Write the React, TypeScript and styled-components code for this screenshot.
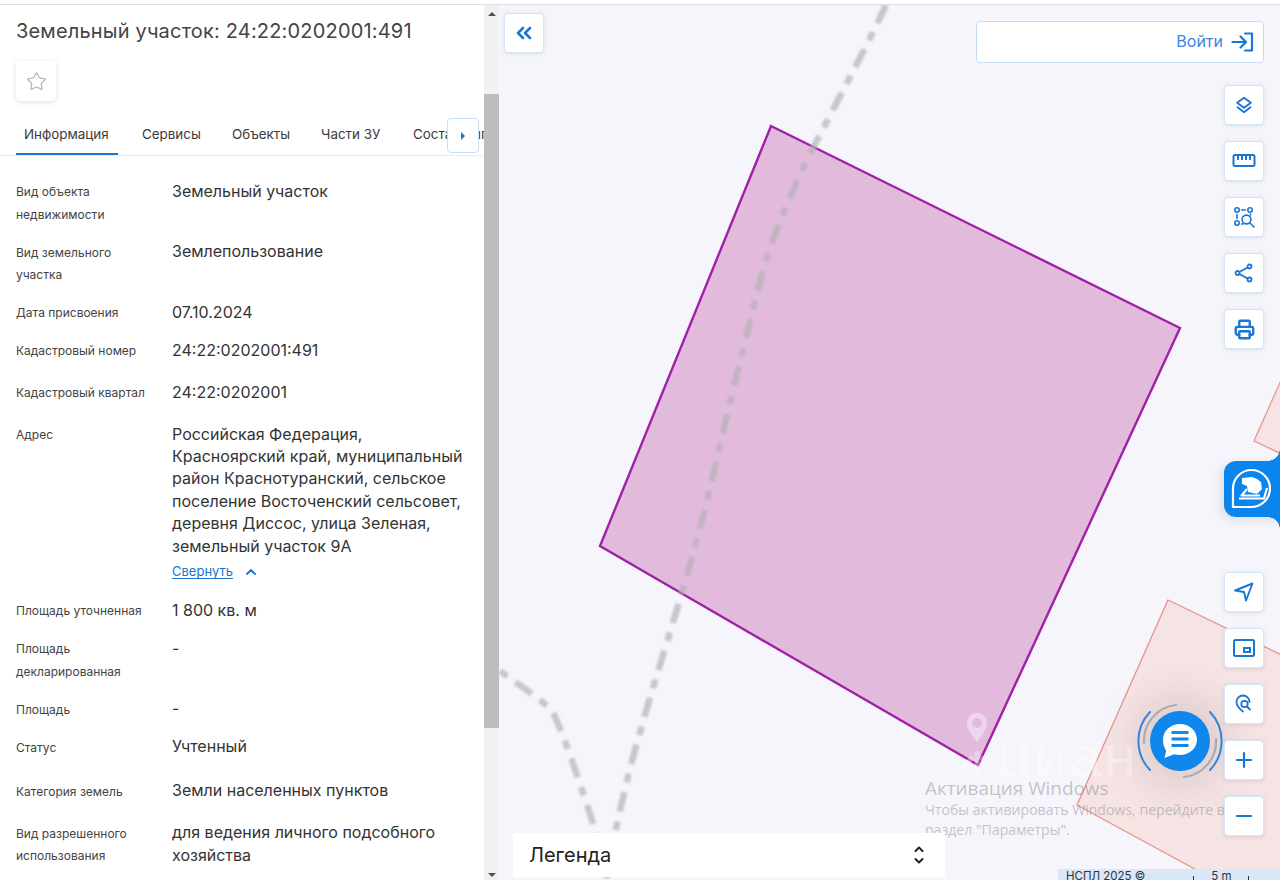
import React from 'react';
import styled, { createGlobalStyle } from 'styled-components';
import { ChevronsLeft, ChevronUp, Star, Printer, Plus, Minus } from 'lucide-react';

const Global = createGlobalStyle`
  html, body { margin: 0; padding: 0; height: 880px; overflow: hidden; background: #fff; }
  body { font-family: Inter, "Liberation Sans", sans-serif; color: #2b2b2b; }
`;

const Page = styled.div`
  width: 1280px; height: 880px; display: flex; flex-direction: column; overflow: hidden;
`;
const TopStrip = styled.div`
  height: 4px; flex: none; background: #fff; border-bottom: 1px solid #dcdfe3;
`;
const Body = styled.div`
  flex: 1; min-height: 0; display: flex;
`;
const Panel = styled.aside`
  position: relative; width: 484px; flex: none; background: #fff; overflow: hidden;
  padding-top: 12px; box-sizing: border-box;
`;
const Title = styled.h1`
  margin: 0 0 0 16px; font-size: 20px; line-height: 28px; font-weight: 400; color: #444;
  letter-spacing: 0.18px; white-space: nowrap;
`;
const StarButton = styled.button`
  display: flex; align-items: center; justify-content: center; width: 40px; height: 40px;
  margin: 16px 0 0 16px; padding: 0; border: 0; border-radius: 4px; background: #fff;
  box-shadow: 0 1px 5px rgba(40, 60, 90, 0.16); color: #b5b5b5;
`;
const Tabs = styled.nav`
  display: flex; gap: 16px; margin-top: 18px; height: 37px; box-sizing: border-box;
  padding-left: 16px; border-bottom: 1px solid #e6edf4; white-space: nowrap; overflow: hidden;
`;
const Tab = styled.div<{ $active?: boolean; $width?: number }>`
  height: 37px; flex: none; box-sizing: border-box; padding: 5px 0 0 8px; font-size: 13.4px; line-height: 20px;
  width: ${p => (p.$width ? `${p.$width}px` : 'auto')};
  color: #3a3a3a; border-bottom: ${p => (p.$active ? '3px solid #1976d2' : '3px solid transparent')};
`;
const TabArrow = styled.button`
  position: absolute; left: 447px; top: 113px; width: 32px; height: 35px; padding: 0;
  display: flex; align-items: center; justify-content: center;
  background: #fff; border: 1px solid #c9def5; border-radius: 4px;
`;
const Fields = styled.div`
  padding: 23.5px 16px 0;
`;
const Row = styled.div<{ $gap?: number }>`
  display: grid; grid-template-columns: 156px 1fr; padding-bottom: ${p => p.$gap ?? 15.7}px;
`;
const Label = styled.div`
  font-size: 12px; line-height: 22.4px; color: #444; padding: 1.6px 16px 0 0; margin-bottom: -1.6px;
`;
const Value = styled.div`
  font-size: 16px; line-height: 22.4px; color: #333;
`;
const Collapse = styled.div`
  display: flex; align-items: center; gap: 10px; height: 28px; padding-top: 1px; margin-bottom: -2.2px;
  font-size: 13px; color: #1976d2; box-sizing: border-box;
  u { text-underline-offset: 2px; }
`;
const Scrollbar = styled.div`
  position: relative; width: 15px; flex: none; background: #f1f1f1;
`;
const ScrollThumb = styled.div`
  position: absolute; left: 0; right: 0; top: 89px; height: 634px; background: #bdbdbd;
`;
const ScrollUp = styled.div`
  position: absolute; left: 4px; top: 7px; width: 0; height: 0;
  border-left: 4px solid transparent; border-right: 4px solid transparent; border-bottom: 4px solid #505050;
`;
const ScrollDown = styled.div`
  position: absolute; left: 4px; bottom: 3px; width: 0; height: 0;
  border-left: 4px solid transparent; border-right: 4px solid transparent; border-top: 4px solid #505050;
`;
const MapArea = styled.main`
  position: relative; flex: 1; min-width: 0; background: #f5f5fb; overflow: hidden;
`;
const MapCanvas = styled.svg`
  position: absolute; left: 0; top: 0; width: 781px; height: 875px;
`;
const ControlButton = styled.button`
  display: flex; align-items: center; justify-content: center; width: 40px; height: 40px; padding: 0;
  background: #fff; border: 1px solid #d5e4f6; border-radius: 4px; box-sizing: border-box;
  box-shadow: 0 1px 4px rgba(60, 90, 130, 0.14); color: #1976d2;
`;
const CollapseHolder = styled.div`
  position: absolute; left: 5px; top: 8px;
`;
const LoginBar = styled.div`
  position: absolute; left: 477px; top: 16px; width: 288px; height: 42px; box-sizing: border-box;
  display: flex; align-items: center; justify-content: flex-end; gap: 8px; padding: 0 9px 2px 0;
  background: #fff; border: 1px solid #c5dcf6; border-radius: 4px;
  font-size: 16px; color: #3d85d8;
`;
const LoginIcon = styled.svg`
  width: 23px; height: 20px; color: #1976d2; flex: none; margin-top: 2px;
`;
const ToolStack = styled.div<{ $top: number }>`
  position: absolute; right: 16px; top: ${p => p.$top}px; display: flex; flex-direction: column; gap: 16px;
`;
const SideTab = styled.div`
  position: absolute; right: 0; top: 456px; width: 56px; height: 56px;
  display: flex; align-items: center; justify-content: center; padding-right: 1px; box-sizing: border-box;
  background: #0b85ee; border-radius: 12px 0 0 12px;
  box-shadow: -3px 3px 10px rgba(40, 60, 90, 0.12);
  &::before, &::after {
    content: ''; position: absolute; right: 0; width: 12px; height: 12px;
  }
  &::before { top: -12px; background: radial-gradient(circle at 0 0, transparent 11.5px, #0b85ee 12px); }
  &::after { bottom: -12px; background: radial-gradient(circle at 0 100%, transparent 11.5px, #0b85ee 12px); }
`;
const ChatWrap = styled.div`
  position: absolute; left: 637px; top: 692px; width: 88px; height: 88px;
  display: flex; align-items: center; justify-content: center;
`;
const ChatRings = styled.svg`
  position: absolute; left: 0; top: 0; width: 88px; height: 88px;
`;
const ChatCircle = styled.div`
  position: relative; width: 60px; height: 60px; border-radius: 50%; background: #0f87ec;
  display: flex; align-items: center; justify-content: center;
  box-shadow: 0 0 38px 16px rgba(90, 90, 90, 0.15);
`;
const Legend = styled.div`
  position: absolute; left: 14px; top: 828px; width: 432px; height: 44px; box-sizing: border-box;
  display: flex; align-items: center; justify-content: space-between; padding: 0 20px 0 16px;
  background: #fff; border-radius: 2px; font-size: 20px; color: #222;
`;
const LegendChevrons = styled.svg`
  width: 12px; height: 20px; display: block;
`;
const Scale = styled.div`
  position: absolute; left: 559px; top: 864px; width: 222px; height: 11px; overflow: hidden;
  background: #d8e8f8; font-size: 11.5px; line-height: 14px; color: #30343a; padding-left: 8px; box-sizing: border-box;
  display: flex; gap: 48px; white-space: nowrap;
`;
const ScaleRuler = styled.span`
  width: 56px; height: 11px; text-align: center; box-sizing: border-box; position: relative;
  &::before, &::after {
    content: ''; position: absolute; bottom: 0; width: 1px; height: 4px; background: #30343a;
  }
  &::before { left: 0; }
  &::after { right: 0; }
`;
const ActivationNote = styled.div`
  position: absolute; left: 426px; top: 771px; color: rgba(120, 120, 125, 0.42);
  font-family: "Open Sans", sans-serif; white-space: nowrap; pointer-events: none;
`;
const ActivationTitle = styled.div`
  font-size: 18.9px; line-height: 24px;
`;
const ActivationText = styled.div`
  font-size: 14.1px; line-height: 20px;
`;
const Watermark = styled.div`
  position: absolute; left: 499px; top: 722px; color: rgba(255, 255, 255, 0.38);
  font-size: 59px; line-height: 60px; font-family: "Liberation Sans", sans-serif; letter-spacing: 2px; pointer-events: none;
`;
const WatermarkMark = styled.svg`
  position: absolute; left: 450px; top: 706px; width: 54px; height: 70px; pointer-events: none;
`;

const fields: { label: string; value: string; gap?: number }[] = [
  { label: 'Вид объекта недвижимости', value: 'Земельный участок' },
  { label: 'Вид земельного участка', value: 'Землепользование' },
  { label: 'Дата присвоения', value: '07.10.2024' },
  { label: 'Кадастровый номер', value: '24:22:0202001:491', gap: 19.6 },
  { label: 'Кадастровый квартал', value: '24:22:0202001', gap: 19.6 },
];
const fieldsAfter: { label: string; value: string; gap?: number }[] = [
  { label: 'Площадь уточненная', value: '1 800 кв. м' },
  { label: 'Площадь декларированная', value: '-' },
  { label: 'Площадь', value: '-' },
  { label: 'Статус', value: 'Учтенный', gap: 21.6 },
  { label: 'Категория земель', value: 'Земли населенных пунктов', gap: 19.6 },
  { label: 'Вид разрешенного использования', value: 'для ведения личного подсобного хозяйства' },
];

const Icon = ({ children, size = 22 }: { children: React.ReactNode; size?: number }) => (
  <svg width={size} height={size} viewBox="0 0 24 24" fill="none" stroke="currentColor" strokeWidth="2" strokeLinecap="round" strokeLinejoin="round">
    {children}
  </svg>
);

export default function App() {
  return (
    <Page>
      <Global />
      <TopStrip />
      <Body>
        <Panel>
          <Title>Земельный участок: 24:22:0202001:491</Title>
          <StarButton><Star size={21} strokeWidth={1.4} /></StarButton>
          <Tabs>
            <Tab $active $width={102}>Информация</Tab>
            <Tab $width={74}>Сервисы</Tab>
            <Tab $width={73}>Объекты</Tab>
            <Tab $width={76}>Части ЗУ</Tab>
            <Tab>Состав выписки</Tab>
          </Tabs>
          <TabArrow>
            <svg width="6" height="8" viewBox="0 0 6 8"><path d="M1 0l4 4-4 4z" fill="#1976d2" /></svg>
          </TabArrow>
          <Fields>
            {fields.map(f => (
              <Row key={f.label} $gap={f.gap}>
                <Label>{f.label}</Label>
                <Value>{f.value}</Value>
              </Row>
            ))}
            <Row>
              <Label>Адрес</Label>
              <Value>
                Российская Федерация, Красноярский край, муниципальный район Краснотуранский, сельское поселение Восточенский сельсовет, деревня Диссос, улица Зеленая, земельный участок 9А
                <Collapse>
                  <u>Свернуть</u>
                  <ChevronUp size={16} strokeWidth={2.800} />
                </Collapse>
              </Value>
            </Row>
            {fieldsAfter.map(f => (
              <Row key={f.label} $gap={f.gap}>
                <Label>{f.label}</Label>
                <Value>{f.value}</Value>
              </Row>
            ))}
          </Fields>
        </Panel>
        <Scrollbar>
          <ScrollUp />
          <ScrollThumb />
          <ScrollDown />
        </Scrollbar>
        <MapArea>
          <MapCanvas viewBox="499 5 781 875">
            <defs>
              <filter id="soft" x="-5%" y="-5%" width="110%" height="110%">
                <feGaussianBlur stdDeviation="0.8" />
              </filter>
            </defs>
            <polygon points="1168,600 1290,659 1290,880 1215,880 1077,805" fill="#f6e3e3" stroke="#e8958a" strokeWidth="1.3" />
            <polygon points="1290,360 1254,441 1290,458" fill="#f6e3e3" stroke="#e8958a" strokeWidth="1.3" />
            <polygon points="771,126 1180,328 978,765 600,546" fill="#e2bbdc" stroke="#a021a8" strokeWidth="2.400" />
            <g fill="none" filter="url(#soft)">
              <path d="M886,5 C860,60 835,105 812,150 C790,195 770,240 758,290 C745,340 728,410 712,480 C698,540 680,600 660,665 C640,730 622,790 606,880" stroke="#b4b0b6" strokeOpacity="0.68" strokeWidth="6.500" strokeDasharray="20 10 9 10" />
              <path d="M500,671 C520,686 540,698 553,712 C570,750 585,800 597,835" stroke="#bfbfc3" strokeOpacity="0.85" strokeWidth="6.500" strokeDasharray="9 10 20 10" />
            </g>
          </MapCanvas>
          <WatermarkMark viewBox="0 0 54 70">
            <path d="M28 2C21.500 2 18 7 18 12c0 7 10 19 10 19s10-12 10-19c0-5-3.500-10-10-10zm0 15a5 5 0 1 1 0-10 5 5 0 0 1 0 10z" fill="rgba(255,255,255,0.4)" />
            <path d="M4 66L24 46M28 40v26M52 66L32 46" stroke="rgba(255,255,255,0.32)" strokeWidth="5" fill="none" />
          </WatermarkMark>
          <Watermark>циан</Watermark>
          <ActivationNote>
            <ActivationTitle>Активация Windows</ActivationTitle>
            <ActivationText>Чтобы активировать Windows, перейдите в</ActivationText>
            <ActivationText>раздел "Параметры".</ActivationText>
          </ActivationNote>
          <CollapseHolder>
            <ControlButton><ChevronsLeft size={24} strokeWidth={2.600} /></ControlButton>
          </CollapseHolder>
          <LoginBar>
            Войти
            <LoginIcon viewBox="0 0 23 20" fill="none" stroke="currentColor" strokeWidth="2.200" strokeLinecap="round" strokeLinejoin="round">
              <path d="M1.500 10H14M9.500 4.500L15 10l-5.500 5.500" />
              <path d="M14 1.500h7v17h-7" />
            </LoginIcon>
          </LoginBar>
          <ToolStack $top={80}>
            <ControlButton>
              <Icon>
                <path d="M12 4l7.500 5.500L12 15 4.500 9.500z" />
                <path d="M5 14.500l7 5.500 7-5.500" />
              </Icon>
            </ControlButton>
            <ControlButton>
              <svg width="24" height="16" viewBox="0 0 24 16" fill="none" stroke="currentColor" strokeWidth="2">
                <rect x="1.500" y="2" width="21" height="11" rx="1.500" />
                <path d="M6 2v5M10 2v5M14 2v5M18 2v5" />
              </svg>
            </ControlButton>
            <ControlButton>
              <svg width="21" height="21" viewBox="0 0 21 21" fill="none" stroke="currentColor" strokeWidth="1.600" strokeLinecap="round">
                <circle cx="3" cy="3" r="2.200" />
                <circle cx="16" cy="3" r="2.200" />
                <circle cx="3" cy="16" r="2.200" />
                <circle cx="12.500" cy="12.500" r="4.400" />
                <path d="M7.500 3h4M3 7.500v4M7.500 17h1.500M16.500 7v1M16 16l4 4" />
              </svg>
            </ControlButton>
            <ControlButton>
              <svg width="20" height="20" viewBox="0 0 20 20" fill="none" stroke="currentColor" strokeWidth="1.800">
                <circle cx="15.500" cy="3.500" r="2" />
                <circle cx="3.500" cy="10" r="2" />
                <circle cx="15.500" cy="16.500" r="2" />
                <path d="M5.300 9L13.700 4.500M5.300 11l8.400 4.500" />
              </svg>
            </ControlButton>
            <ControlButton><Printer size={21} strokeWidth={2.700} /></ControlButton>
          </ToolStack>
          <SideTab>
            <svg width="42" height="42" viewBox="0 0 42 42" fill="none" stroke="#fff" strokeWidth="2.200" strokeLinejoin="round">
              <path d="M2 39V20.500a18.500 18.500 0 1 1 18.500 18.500z" />
              <path d="M11 10l10-1 5 2 4 3 1 7-5 5-9-2-1-6-5-2z" fill="#fff" stroke="none" />
              <path d="M16 21l-5.500 6.500H29M8 30.500h25L36 20" />
            </svg>
          </SideTab>
          <ChatWrap>
            <ChatRings viewBox="0 0 88 88" fill="none" strokeLinecap="round">
              <path d="M14 15a42 42 0 0 0 0 58M74 15a42 42 0 0 1 0 58" stroke="#2d8be6" strokeWidth="2" />
              <path d="M8 46A36 36 0 0 1 40 8M80 42A36 36 0 0 1 48 80" stroke="#b4b4b8" strokeWidth="2.200" />
            </ChatRings>
            <ChatCircle>
              <svg width="36" height="36" viewBox="0 0 36 36">
                <path d="M18 1c9.500 0 17 7 17 15.500S27.500 32 18 32c-2 0-4-.3-5.800-.8L2.500 35l1.700-7.500C2 25 1 21 1 16.500 1 8 8.500 1 18 1z" fill="#fff" />
                <path d="M9.500 9.500h17M9.500 16h17M9.500 22.500h17" stroke="#0f87ec" strokeWidth="2.800" />
              </svg>
            </ChatCircle>
          </ChatWrap>
          <ToolStack $top={567}>
            <ControlButton>
              <svg width="22" height="22" viewBox="0 0 22 22" fill="none" stroke="currentColor" strokeWidth="1.900" strokeLinejoin="round">
                <path d="M2 9.500L19.500 2.500 13 19.500 11 11z" />
              </svg>
            </ControlButton>
            <ControlButton>
              <svg width="22" height="20" viewBox="0 0 22 20" fill="none" stroke="currentColor" strokeWidth="2">
                <rect x="1" y="2" width="20" height="16" rx="1.500" />
                <rect x="11" y="10" width="6" height="4" />
              </svg>
            </ControlButton>
            <ControlButton>
              <svg width="20" height="20" viewBox="0 0 20 20" fill="none" stroke="currentColor" strokeWidth="1.800" strokeLinecap="round">
                <path d="M9 17.500C5 14.500 2.500 11.500 2.500 8a6.500 6.500 0 0 1 13 0" />
                <circle cx="10.500" cy="10" r="3.200" />
                <path d="M13 12.500l3 3" />
              </svg>
            </ControlButton>
            <ControlButton><Plus size={24} strokeWidth={2.200} /></ControlButton>
            <ControlButton><Minus size={24} strokeWidth={2.200} /></ControlButton>
          </ToolStack>
          <Legend>
            Легенда
            <LegendChevrons viewBox="0 0 12 20" fill="none" stroke="#222" strokeWidth="2" strokeLinecap="round" strokeLinejoin="round">
              <path d="M2.500 6L6 2.500 9.500 6M2.500 14L6 17.500 9.500 14" />
            </LegendChevrons>
          </Legend>
          <Scale>
            <span>НСПЛ 2025 ©</span>
            <ScaleRuler>5 m</ScaleRuler>
          </Scale>
        </MapArea>
      </Body>
    </Page>
  );
}
